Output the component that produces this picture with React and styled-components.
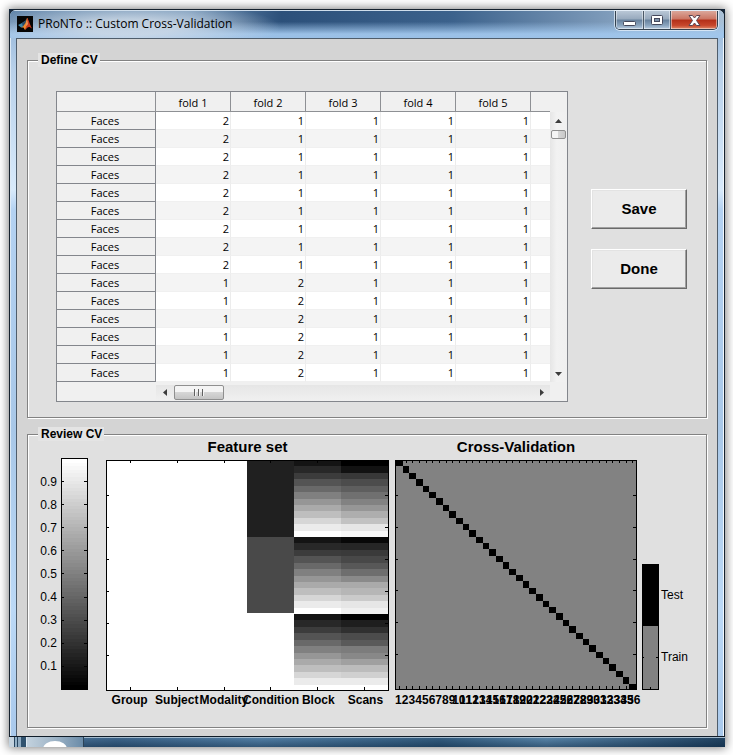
import React from "react";
import styled, { createGlobalStyle } from "styled-components";

const GlobalStyle = createGlobalStyle`
  * { box-sizing: border-box; }
  body { margin: 0; background: #fff; font-family: "Liberation Sans", Arial, sans-serif; color: #000; }
`;

const Desktop = styled.div`
  padding: 9px 8px 8px 9px;
`;

const Shadow = styled.div`
  background: #14263a;
  box-shadow: 0 0 9px 1px rgba(0, 0, 0, 0.5);
`;

const Frame = styled.main`
  border: 1px solid #16222e;
  border-bottom: 0;
  border-radius: 7px 7px 0 0;
  overflow: hidden;
  background: linear-gradient(#8fb2d6 0, #b9d1ea 60px, #d8eafb 180px, #b4d2f2 200px, #a9c8e8 420px, #bcd9f6 600px, #a9c9ec 100%);
  box-shadow: inset 1px 1px 0 #dce9f5, inset -1px 0 0 #f2f8fd;
`;

const TitleBar = styled.header`
  display: flex;
  align-items: flex-start;
  height: 28px;
  padding-left: 7px;
  background:
    radial-gradient(ellipse 150px 26px at 120px 16px, rgba(205, 217, 230, 0.85) 30%, rgba(190, 206, 224, 0) 100%),
    linear-gradient(rgba(0, 0, 0, 0) 0 40%, rgba(160, 198, 236, 0.95) 85%),
    linear-gradient(90deg, #5f83a8 0, #6f92b5 25%, #2c507a 38%, #3c628c 62%, #7f9cbb 84%, #a9c0d6 100%);
  border-top: 1px solid #cfdeec;
`;

const AppIcon = styled.svg`
  flex: none;
  width: 16px;
  height: 16px;
  margin: 5px 5px 0 0;
`;

const Title = styled.h1`
  flex: 1;
  min-width: 0;
  margin: 5px 0 0;
  font: 400 12px/16px "Open Sans", "Noto Sans", sans-serif;
  white-space: nowrap;
`;

const Controls = styled.div`
  display: flex;
  height: 19px;
  margin-right: 6px;
  border: 1px solid #33414f;
  border-top: 0;
  border-radius: 0 0 5px 5px;
  overflow: hidden;
  box-shadow: 0 0 0 1px rgba(235, 244, 252, 0.7);
`;

const ControlButton = styled.button`
  display: flex;
  align-items: center;
  justify-content: center;
  width: ${(p) => (p.$close ? 47 : 27)}px;
  padding: 0;
  border: 0;
  border-left: ${(p) => (p.$first ? 0 : "1px solid #4b5866")};
  background: ${(p) =>
    p.$close
      ? "linear-gradient(#dba79b 0, #cb7563 45%, #b32f18 50%, #c7472c 80%, #e08a6a)"
      : "linear-gradient(#b9c7d6 0, #97a9bd 45%, #66809c 50%, #8ba5bf 80%, #b8cbe0)"};
  box-shadow: inset 1px 0 0 rgba(255, 255, 255, 0.45), inset -1px -1px 0 rgba(255, 255, 255, 0.45);
`;

const Body = styled.div`
  display: flex;
  flex-direction: column;
  gap: 9px;
  margin: 0 6px;
  padding: 14px 10px 8px 10px;
  border: 1px solid #4f5d6b;
  border-bottom: 0;
  background: #d4d4d4;
`;

const Panel = styled.fieldset`
  min-width: 0;
  margin: 0;
  padding: 0;
  border: 1px solid #828282;
  background: #e0e0e0;
  box-shadow: 1px 1px 0 #fff, inset 1px 1px 0 #fff;
`;

const Legend = styled.legend`
  margin-left: 10px;
  padding: 0 2px 0 3px;
  background: #e4e4e4;
  font: 700 12px/14px "Liberation Sans", Arial, sans-serif;
`;

const DefineRow = styled.div`
  display: flex;
  align-items: flex-start;
  gap: 23px;
  padding: 24px 19px 15px 28px;
`;

const GridBox = styled.div`
  flex: 1;
  min-width: 0;
  display: grid;
  grid-template-columns: minmax(0, 1fr) 17px;
  border: 1px solid #83868c;
  background: #f0f0f0;
`;

const Table = styled.table`
  width: 100%;
  table-layout: fixed;
  border-collapse: separate;
  border-spacing: 0;
  font: 400 11px/17px "Open Sans", "Noto Sans", sans-serif;
`;

const Col = styled.col`
  width: ${(p) => (p.$head ? "99px" : p.$rest ? "auto" : "75px")};
`;

const HeadCell = styled.th`
  height: 20px;
  padding: 2px 0 0;
  font-weight: 400;
  background: #f0f0f0;
  border-bottom: 1px solid #8e9094;
  border-right: ${(p) => (p.$last ? 0 : "1px solid #8e9094")};
`;

const RowHead = styled.th`
  height: 18px;
  padding: 0 2px 0 0;
  font-weight: 400;
  background: #f0f0f0;
  border-bottom: 1px solid #83868c;
  border-right: 1px solid #83868c;
`;

const Cell = styled.td`
  height: 18px;
  padding: 0 1px 0 0;
  text-align: right;
  background: ${(p) => (p.$odd ? "#f4f4f4" : "#fff")};
  border-bottom: 1px solid #f0f0f0;
  border-right: ${(p) => (p.$last ? 0 : "1px solid #ececec")};
`;

const VScroll = styled.div`
  display: flex;
  flex-direction: column;
  margin-top: 20px;
  padding: 0 1px;
  background: linear-gradient(90deg, #e6e6e6, #f2f2f2 40%, #f0f0f0);
`;

const HScroll = styled.div`
  display: flex;
  height: 19px;
  margin-left: 98px;
  padding: 3px 0 1px;
  border-left: 1px solid #f0f0f0;
  background: linear-gradient(#f0f0f0 3px, #e6e6e6 3px, #f0f0f0);
`;

const ArrowButton = styled.button`
  flex: none;
  display: flex;
  align-items: center;
  justify-content: center;
  width: ${(p) => (p.$wide ? 18 : 15)}px;
  height: ${(p) => (p.$wide ? 15 : 18)}px;
  padding: 0;
  border: 0;
  background: transparent;
`;

const Thumb = styled.div`
  flex: none;
  display: flex;
  align-items: center;
  justify-content: center;
  gap: 2px;
  width: ${(p) => (p.$wide ? 50 : 15)}px;
  height: ${(p) => (p.$wide ? 15 : 9)}px;
  border: 1px solid #8f8f8f;
  border-radius: 2px;
  background: ${(p) =>
    p.$wide
      ? "linear-gradient(#f4f4f4 0 45%, #d6d6d6 50%, #c4c4c4)"
      : "linear-gradient(90deg, #f4f4f4 0 45%, #d6d6d6 50%, #c8c8c8)"};
`;

const Grip = styled.i`
  width: 2px;
  height: 7px;
  border-left: 1px solid #606060;
  border-right: 1px solid #f4f4f4;
`;

const Track = styled.div`
  flex: 1;
`;

const Actions = styled.div`
  display: flex;
  flex-direction: column;
  gap: 20px;
  width: 96px;
  padding-top: 98px;
`;

const PushButton = styled.button`
  height: 40px;
  padding: 0;
  border: 1px solid;
  border-color: #fff #6a6a6a #6a6a6a #fff;
  background: #ebebeb;
  box-shadow: inset -1px -1px 0 #a0a0a0, inset 1px 1px 0 #e3e3e3;
  font: 700 15px/20px "Liberation Sans", Arial, sans-serif;
  color: #000;
`;

const ReviewRow = styled.div`
  display: grid;
  grid-template-columns: 33px 45px minmax(0, 289fr) minmax(0, 247fr) 17px 47px;
  padding-bottom: 19px;
`;

const ScaleLabels = styled.div`
  padding: 30px 4px 0 0;
  text-align: right;
  font-size: 12px;
  line-height: 23px;
`;

const ScaleBar = styled.svg`
  display: block;
  width: 27px;
  height: 232px;
  margin-top: 17px;
`;

const Figure = styled.figure`
  min-width: 0;
  margin: 0;
  padding-right: ${(p) => (p.$first ? 6 : 5)}px;
`;

const FigureTitle = styled.figcaption`
  height: 19px;
  font: 700 15px/12px "Liberation Sans", Arial, sans-serif;
  text-align: center;
  white-space: nowrap;
`;

const Plot = styled.svg`
  display: block;
  width: 100%;
  height: 231px;
`;

const AxisLabels = styled.div`
  display: grid;
  grid-template-columns: repeat(${(p) => p.$count}, minmax(0, 1fr));
  padding-top: 1px;
  font: 700 12px/16px "Liberation Sans", Arial, sans-serif;
`;

const AxisLabel = styled.span`
  display: flex;
  justify-content: center;
  white-space: nowrap;
`;

const KeyBar = styled.svg`
  display: block;
  width: 17px;
  height: 126px;
  margin-top: 123px;
`;

const KeyLabels = styled.div`
  margin-top: 123px;
  padding-left: 2px;
  font-size: 12px;
  line-height: 62px;
`;

const Taskbar = styled.footer`
  display: flex;
  height: 11px;
  border-top: 1px solid #101c28;
  background: linear-gradient(#a3bacd 0 1px, rgba(60, 100, 140, 0.3) 1px, rgba(20, 50, 80, 0.6)),
    linear-gradient(90deg, #5f87a8 0, #3d6488 15%, #5d8bb0 35%, #2f5878 60%, #6593b5 75%, #16344e 100%);
`;

const TaskEdge = styled.div`
  width: 17px;
  background: linear-gradient(90deg, #c3d2de 0 5px, #27455f 5px 6px, #93b0c6 6px 8px, #27455f 8px 9px, #8fabc2 9px 12px, #31536f 12px);
`;

const TaskButton = styled.button`
  display: flex;
  align-items: flex-end;
  justify-content: center;
  width: 58px;
  padding: 0;
  border: 0;
  border-left: 1px solid #dfe9f1;
  border-right: 1px solid #2c4357;
  background: linear-gradient(90deg, #c3d2de, #9db3c6 50%, #6a8ba8);
`;

const FOLD_COUNT = 5;
const foldRows = Array.from({ length: 15 }, (_, r) =>
  Array.from({ length: FOLD_COUNT }, (_, c) => (r < 9 ? (c === 0 ? 2 : 1) : c === 1 ? 2 : 1))
);

const BLOCKS = [20, 40, 60, 84, 105, 128, 150, 170, 190, 214, 235, 255];
const SCANS = [
  0, 18, 56, 76, 94, 112, 130, 150, 174, 194, 230, 248,
  8, 38, 58, 72, 88, 110, 138, 170, 182, 202, 230, 240,
  0, 30, 48, 76, 90, 124, 136, 160, 188, 208, 235, 255,
];
const features = ["Group", "Subject", "Modality", "Condition", "Block", "Scans"];
const scaleValues = ["0.9", "0.8", "0.7", "0.6", "0.5", "0.4", "0.3", "0.2", "0.1"];
const grey = (v) => `rgb(${v},${v},${v})`;
const range = (n) => Array.from({ length: n }, (_, i) => i);

function MatlabIcon() {
  return (
    <AppIcon viewBox="0 0 16 16" aria-hidden="true">
      <rect width="16" height="16" fill="#050505" />
      <path d="M1 9 L5 7 L8 5 L6 11 L4 11.5 Z" fill="#3f86a8" />
      <path d="M5 7 L8 5 L10 2 L8.5 8 L6 11 Z" fill="#2a4a66" />
      <path d="M4 11.5 L6 10.5 L8.5 7 L10 2 L11 3 L10.5 10 L8 14 L6.5 11.5 Z" fill="#f08a2c" />
      <path d="M10 2 C11.5 3 13 9 15 12.5 C13 11 12 10.5 10.5 11.5 L8 14 C9.5 10 10 6 10 2 Z" fill="#c93a1c" />
      <path d="M10 3 L10.6 8 L9.4 10.5 Z" fill="#ffd08a" />
    </AppIcon>
  );
}

function Arrow({ d }) {
  return (
    <svg width="7" height="7" viewBox="0 0 7 7" aria-hidden="true">
      <path d={d} fill="#3c3c3c" />
    </svg>
  );
}

function FoldTable() {
  return (
    <GridBox>
      <Table>
        <colgroup>
          <Col $head />
          {range(FOLD_COUNT).map((i) => <Col key={i} />)}
          <Col $rest />
        </colgroup>
        <thead>
          <tr>
            <HeadCell />
            {range(FOLD_COUNT).map((i) => <HeadCell key={i} scope="col">fold {i + 1}</HeadCell>)}
            <HeadCell $last />
          </tr>
        </thead>
        <tbody>
          {foldRows.map((row, r) => (
            <tr key={r}>
              <RowHead scope="row">Faces</RowHead>
              {row.map((v, c) => <Cell key={c} $odd={r % 2 === 1}>{v}</Cell>)}
              <Cell $last $odd={r % 2 === 1} />
            </tr>
          ))}
        </tbody>
      </Table>
      <VScroll>
        <ArrowButton type="button" aria-label="Scroll up"><Arrow d="M0 5 L3.5 1 L7 5 Z" /></ArrowButton>
        <Thumb />
        <Track />
        <ArrowButton type="button" aria-label="Scroll down"><Arrow d="M0 2 L7 2 L3.5 6 Z" /></ArrowButton>
      </VScroll>
      <HScroll>
        <ArrowButton $wide type="button" aria-label="Scroll left"><Arrow d="M5 0 L5 7 L1 3.5 Z" /></ArrowButton>
        <Thumb $wide><Grip /><Grip /><Grip /></Thumb>
        <Track />
        <ArrowButton $wide type="button" aria-label="Scroll right"><Arrow d="M2 0 L2 7 L6 3.5 Z" /></ArrowButton>
      </HScroll>
    </GridBox>
  );
}

function ColourScale() {
  const step = 230 / 64;
  return (
    <ScaleBar viewBox="0 0 27 232" shapeRendering="crispEdges" aria-hidden="true">
      {range(64).map((i) => (
        <rect key={i} x="1" y={1 + Math.round(i * step)} width="25" height="4" fill={grey(Math.round(255 - (i * 255) / 63))} />
      ))}
      {range(9).map((i) => (
        <path key={i} d={`M1 ${23.5 + Math.round(i * 23.1)} h2 M23 ${23.5 + Math.round(i * 23.1)} h3`} stroke="#000" />
      ))}
      <rect x="0.5" y="0.5" width="26" height="231" fill="none" stroke="#000" />
    </ScaleBar>
  );
}

function Ticks({ width, height, columns }) {
  return (
    <g stroke="#000">
      {range(columns).map((i) => {
        const x = Math.floor(1 + ((i + 0.5) * (width - 2)) / columns) + 0.5;
        return <path key={i} d={`M${x} 0 v3 M${x} ${height} v-4`} />;
      })}
      {range(6).map((i) => {
        const y = Math.floor(((i + 1) * 5 + 0.5) * (height / 36)) + 0.5;
        return <path key={i} d={`M0 ${y} h3 M${width} ${y} h-4`} />;
      })}
      <rect x="0.5" y="0.5" width={width - 1} height={height - 1} fill="none" />
    </g>
  );
}

function FeaturePlot() {
  const y = (i) => Math.round(i * (231 / 36));
  return (
    <Plot viewBox="0 0 283 231" preserveAspectRatio="none" shapeRendering="crispEdges" role="img" aria-label="Feature set matrix">
      <rect width="283" height="231" fill="#fff" />
      <rect x="141" y="0" width="47" height="77" fill="#202020" />
      <rect x="141" y="77" width="47" height="76" fill="#494949" />
      {SCANS.map((v, i) => (
        <g key={i}>
          <rect x="188" y={y(i)} width="47" height={y(i + 1) - y(i)} fill={grey(BLOCKS[i % 12])} />
          <rect x="235" y={y(i)} width="47" height={y(i + 1) - y(i)} fill={grey(v)} />
        </g>
      ))}
      <Ticks width={283} height={231} columns={6} />
    </Plot>
  );
}

function ValidationPlot() {
  const x = (i) => 1 + Math.round(i * (240 / 36));
  const y = (i) => Math.round(i * (230 / 36));
  return (
    <Plot viewBox="0 0 242 231" preserveAspectRatio="none" shapeRendering="crispEdges" role="img" aria-label="Cross-validation matrix">
      <rect width="242" height="230" fill="#828282" />
      {range(36).map((i) => (
        <rect key={i} x={x(i)} y={y(i)} width={x(i + 1) - x(i)} height={y(i + 1) - y(i)} fill="#000" />
      ))}
      <Ticks width={242} height={230} columns={36} />
    </Plot>
  );
}

export default function App() {
  return (
    <Desktop>
      <GlobalStyle />
      <Shadow>
        <Frame>
          <TitleBar>
            <MatlabIcon />
            <Title>PRoNTo :: Custom Cross-Validation</Title>
            <Controls>
              <ControlButton $first type="button" aria-label="Minimize">
                <svg width="13" height="11" viewBox="0 0 13 11"><rect x="0.5" y="6.5" width="12" height="4" rx="1" fill="#fff" stroke="#45485c" /></svg>
              </ControlButton>
              <ControlButton type="button" aria-label="Maximize">
                <svg width="13" height="11" viewBox="0 0 13 11">
                  <rect x="0.5" y="0.5" width="11" height="9" rx="1" fill="#fff" stroke="#45485c" />
                  <rect x="3.5" y="3.5" width="5" height="3" fill="#7e93ab" stroke="#45485c" />
                </svg>
              </ControlButton>
              <ControlButton $close type="button" aria-label="Close">
                <svg width="13" height="11" viewBox="0 0 13 11">
                  <path d="M1 0.5 H4.5 L6.5 3 L8.5 0.5 H12 L8.5 5.5 L12 10.5 H8.5 L6.5 8 L4.5 10.5 H1 L4.5 5.5 Z" fill="#fff" stroke="#5a4450" />
                </svg>
              </ControlButton>
            </Controls>
          </TitleBar>
          <Body>
            <Panel>
              <Legend>Define CV</Legend>
              <DefineRow>
                <FoldTable />
                <Actions>
                  <PushButton type="button">Save</PushButton>
                  <PushButton type="button">Done</PushButton>
                </Actions>
              </DefineRow>
            </Panel>
            <Panel>
              <Legend>Review CV</Legend>
              <ReviewRow>
                <ScaleLabels>
                  {scaleValues.map((v) => <div key={v}>{v}</div>)}
                </ScaleLabels>
                <ColourScale />
                <Figure $first>
                  <FigureTitle>Feature set</FigureTitle>
                  <FeaturePlot />
                  <AxisLabels $count={6}>
                    {features.map((f) => <AxisLabel key={f}>{f}</AxisLabel>)}
                  </AxisLabels>
                </Figure>
                <Figure>
                  <FigureTitle>Cross-Validation</FigureTitle>
                  <ValidationPlot />
                  <AxisLabels $count={36}>
                    {range(36).map((i) => <AxisLabel key={i}>{i + 1}</AxisLabel>)}
                  </AxisLabels>
                </Figure>
                <KeyBar viewBox="0 0 17 126" shapeRendering="crispEdges" aria-hidden="true">
                  <rect x="0.5" y="0.5" width="16" height="125" fill="#828282" stroke="#000" />
                  <rect width="17" height="62" fill="#000" />
                  <path d="M1 93.5 h1 M14 93.5 h2 M8.5 123 v2" stroke="#000" />
                </KeyBar>
                <KeyLabels>
                  <div>Test</div>
                  <div>Train</div>
                </KeyLabels>
              </ReviewRow>
            </Panel>
          </Body>
        </Frame>
        <Taskbar>
          <TaskEdge />
          <TaskButton type="button" aria-label="Start">
            <svg width="24" height="6" viewBox="0 0 24 6"><ellipse cx="12" cy="8" rx="12" ry="8" fill="#fff" /></svg>
          </TaskButton>
        </Taskbar>
      </Shadow>
    </Desktop>
  );
}
